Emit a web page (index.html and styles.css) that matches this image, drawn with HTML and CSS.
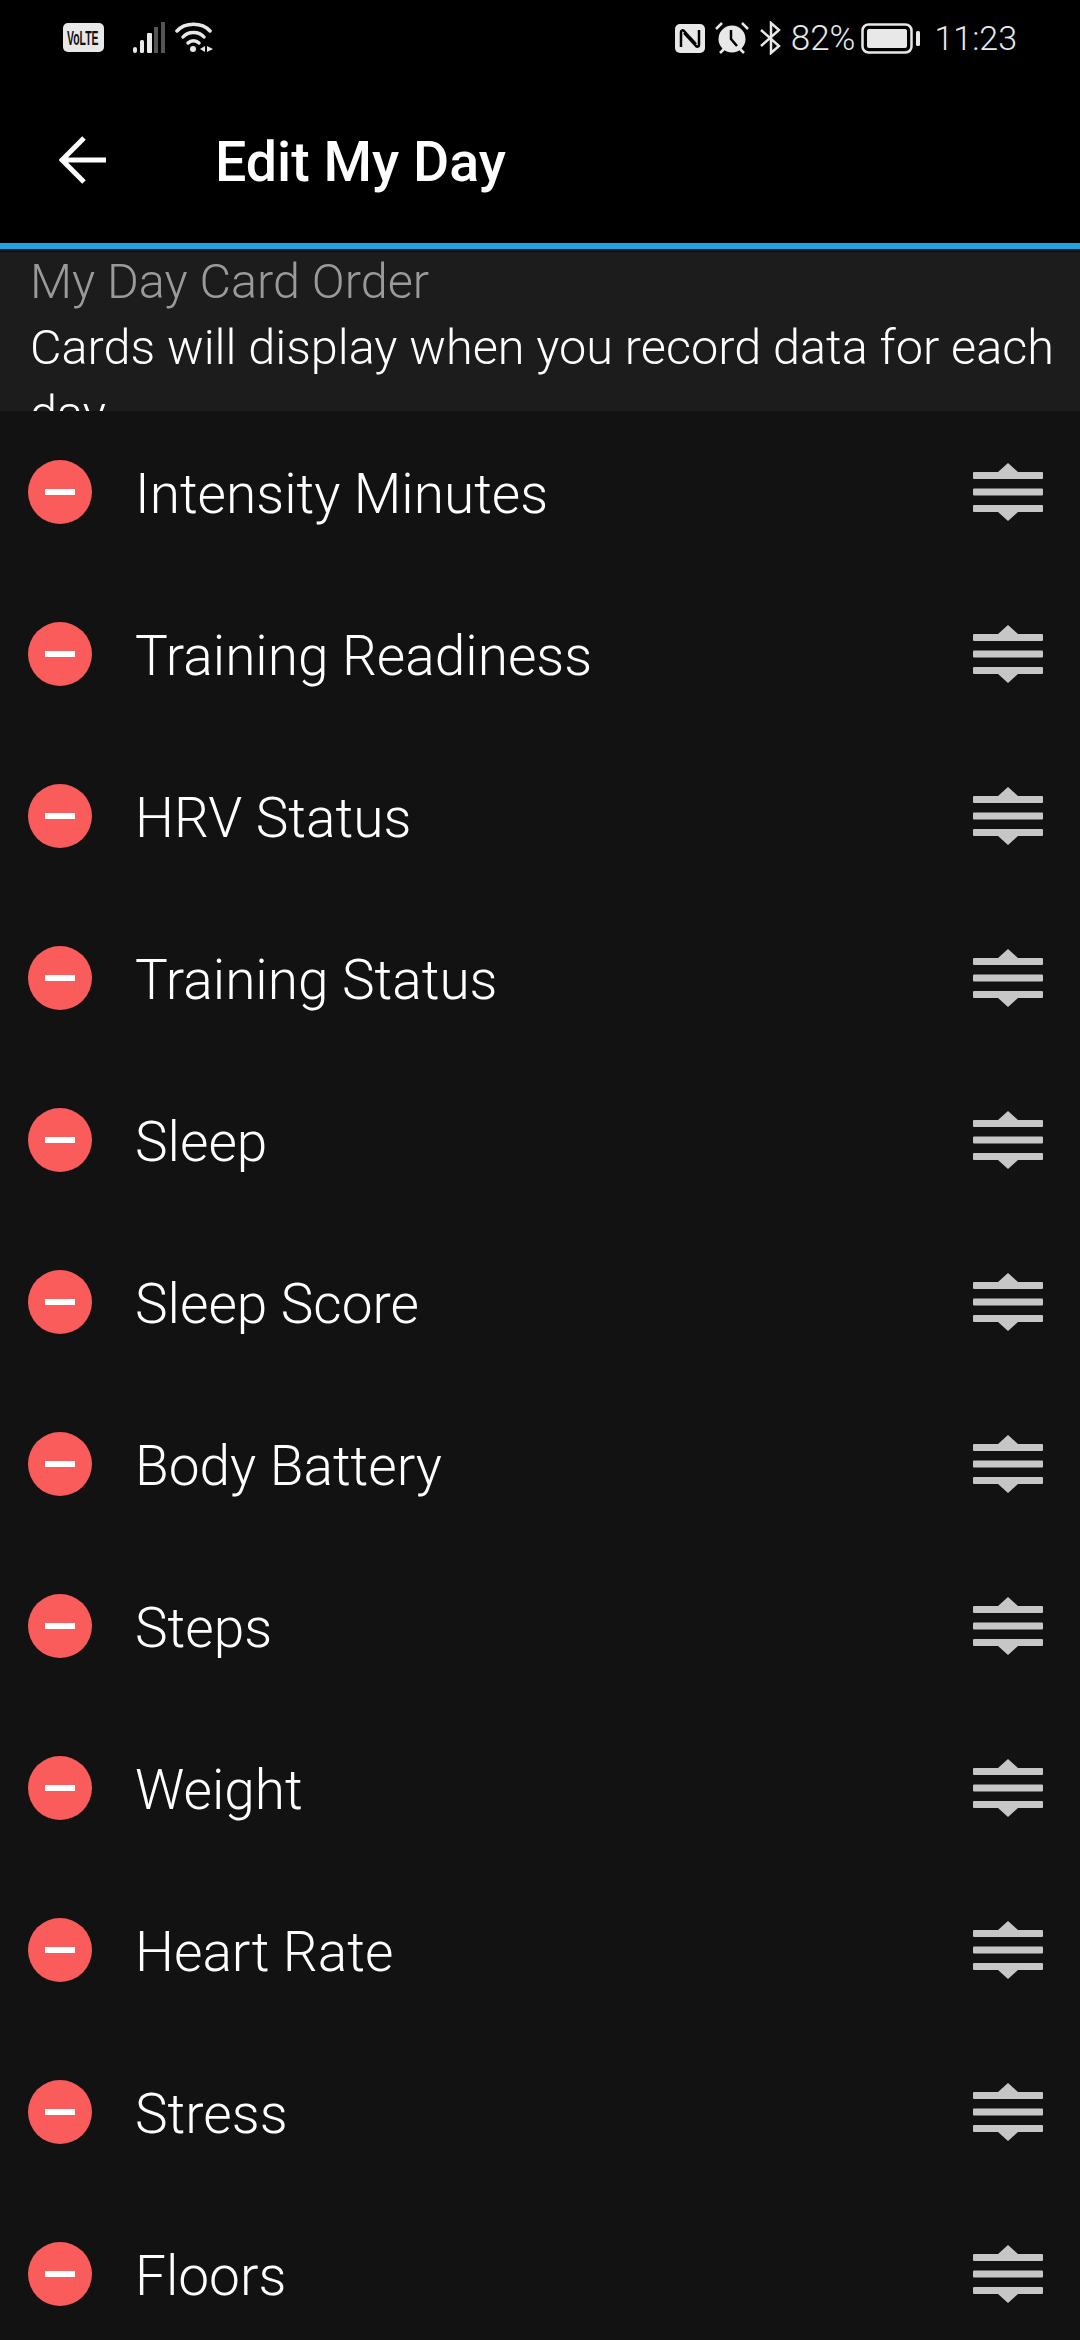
FILE: index.html
```html
<!DOCTYPE html>
<html>
    <head>
        <meta charset="utf-8" />
        <title>Edit My Day</title>
        <link rel="stylesheet" href="styles.css">
    </head>
    <body>
        <svg class="defs" width="0" height="0">
            <symbol id="minus" viewBox="0 0 64 64">
                <circle cx="32" cy="32" r="32" fill="#fa5c5c"/>
                <rect x="17" y="29" width="30" height="6" fill="#fff"/>
            </symbol>
            <symbol id="drag" viewBox="0 0 70 58">
                <path d="M35 0L45 9H25Z" fill="#c6c6c6"/>
                <path d="M35 58L45 49H25Z" fill="#c6c6c6"/>
                <rect x="0" y="9" width="70" height="7" rx="1" fill="#c6c6c6"/>
                <rect x="0" y="25.500" width="70" height="7" rx="1" fill="#c6c6c6"/>
                <rect x="0" y="42" width="70" height="7" rx="1" fill="#c6c6c6"/>
            </symbol>
        </svg>

        <div class="status-bar">
            <div class="status-left">
                <svg class="volte" width="41" height="29" viewBox="0 0 41 29">
                    <rect width="41" height="29" rx="5" fill="#e8e8e8"/>
                    <text transform="translate(4 22) scale(.72 1.45)" font-family="Liberation Sans" font-weight="bold" font-size="14.500" fill="#111">VoLTE</text>
                </svg>
                <svg class="signal" width="32" height="31" viewBox="0 0 32 31">
                    <rect x="0" y="25" width="4" height="6" rx="2" fill="#e8e8e8"/>
                    <rect x="7" y="18" width="4" height="13" rx="1.500" fill="#e8e8e8"/>
                    <rect x="14" y="11" width="5" height="20" rx="1" fill="#e8e8e8"/>
                    <rect x="21" y="5" width="4" height="26" fill="#555"/>
                    <rect x="28" y="0" width="4" height="31" fill="#555"/>
                </svg>
                <svg class="wifi" width="38" height="31" viewBox="0 0 38 31">
                    <path d="M2 9C10 0 27 0 35 9" fill="none" stroke="#e8e8e8" stroke-width="3.500" stroke-linecap="round"/>
                    <path d="M8 15C13 9 24 9 29 15" fill="none" stroke="#e8e8e8" stroke-width="3.500" stroke-linecap="round"/>
                    <path d="M13 21C16 18 21 18 24 21" fill="none" stroke="#e8e8e8" stroke-width="3.500" stroke-linecap="round"/>
                    <circle cx="18" cy="27" r="3" fill="#e8e8e8"/>
                    <path d="M30 24V30L25 27Z" fill="#e8e8e8"/>
                    <path d="M32 24V30L38 27Z" fill="#e8e8e8"/>
                </svg>
            </div>
            <div class="status-right">
                <svg class="nfc" width="30" height="29" viewBox="0 0 30 29">
                    <rect width="30" height="29" rx="5" fill="#e8e8e8"/>
                    <path d="M6 23V8C6 6 8 6 9 7L21 20M24 6V21C24 23 22 23 21 22L9 9" fill="none" stroke="#000" stroke-width="2.500"/>
                </svg>
                <svg class="alarm" width="34" height="32" viewBox="0 0 34 32">
                    <circle cx="17" cy="17" r="13.500" fill="#e8e8e8"/>
                    <path d="M16 8V17L22 24" fill="none" stroke="#000" stroke-width="2.500"/>
                    <path d="M1 7L7 1M33 7L27 1M5 31L9 27M29 31L25 27" stroke="#e8e8e8" stroke-width="2.500"/>
                </svg>
                <svg class="bluetooth" width="21" height="34" viewBox="0 0 21 34">
                    <path d="M1 9L19 25L11 32V2L19 9L1 25" fill="none" stroke="#e8e8e8" stroke-width="2.500"/>
                </svg>
                <span class="battery-pct">82%</span>
                <svg class="battery" width="59" height="31" viewBox="0 0 59 31">
                    <rect x="1.500" y="1.500" width="49" height="28" rx="6" fill="none" stroke="#e8e8e8" stroke-width="2.500"/>
                    <rect x="6" y="6" width="40" height="19" rx="2" fill="#e8e8e8"/>
                    <rect x="55" y="8" width="4" height="15" rx="1.500" fill="#e8e8e8"/>
                </svg>
                <span class="clock">11:23</span>
            </div>
        </div>

        <header class="toolbar">
            <svg class="back" width="47" height="48" viewBox="0 0 47 48">
                <path d="M3 24H47M25 2L3 24L25 46" fill="none" stroke="#fff" stroke-width="5"/>
            </svg>
            <h1>Edit My Day</h1>
        </header>

        <section class="intro">
            <p class="intro-title">My Day Card Order</p>
            <p class="intro-text">Cards will display when you record data for each day</p>
        </section>

        <ul class="cards">
            <li><svg class="remove"><use href="#minus"/></svg><span>Intensity Minutes</span><svg class="handle"><use href="#drag"/></svg></li>
            <li><svg class="remove"><use href="#minus"/></svg><span>Training Readiness</span><svg class="handle"><use href="#drag"/></svg></li>
            <li><svg class="remove"><use href="#minus"/></svg><span>HRV Status</span><svg class="handle"><use href="#drag"/></svg></li>
            <li><svg class="remove"><use href="#minus"/></svg><span>Training Status</span><svg class="handle"><use href="#drag"/></svg></li>
            <li><svg class="remove"><use href="#minus"/></svg><span>Sleep</span><svg class="handle"><use href="#drag"/></svg></li>
            <li><svg class="remove"><use href="#minus"/></svg><span>Sleep Score</span><svg class="handle"><use href="#drag"/></svg></li>
            <li><svg class="remove"><use href="#minus"/></svg><span>Body Battery</span><svg class="handle"><use href="#drag"/></svg></li>
            <li><svg class="remove"><use href="#minus"/></svg><span>Steps</span><svg class="handle"><use href="#drag"/></svg></li>
            <li><svg class="remove"><use href="#minus"/></svg><span>Weight</span><svg class="handle"><use href="#drag"/></svg></li>
            <li><svg class="remove"><use href="#minus"/></svg><span>Heart Rate</span><svg class="handle"><use href="#drag"/></svg></li>
            <li><svg class="remove"><use href="#minus"/></svg><span>Stress</span><svg class="handle"><use href="#drag"/></svg></li>
            <li><svg class="remove"><use href="#minus"/></svg><span>Floors</span><svg class="handle"><use href="#drag"/></svg></li>
        </ul>
    </body>
</html>
```
FILE: styles.css
```css
html,
body {
    margin: 0;
    height: 2340px;
    overflow: hidden;
}

body {
    background-color: #121212;
    font-family: Roboto, sans-serif;
    color: #fff;
}

.defs {
    display: block;
    height: 0;
}

.status-bar {
    display: flex;
    justify-content: space-between;
    align-items: center;
    height: 76px;
    padding: 0 63px;
    background-color: #000;
    color: #e8e8e8;
}

.status-left,
.status-right {
    display: flex;
    align-items: center;
}

.status-left {
    margin-top: -1px;
}

.volte {
    margin-right: 29px;
}

.signal {
    margin-right: 10px;
}

.nfc {
    margin-right: 10px;
}

.alarm {
    margin-right: 11px;
}

.bluetooth {
    margin-right: 10px;
}

.battery-pct {
    font-size: 35px;
    font-weight: 300;
}

.clock {
    font-size: 34px;
    font-weight: 300;
}

.battery {
    margin: 0 14px 0 6px;
}

.toolbar {
    display: flex;
    align-items: center;
    height: 167px;
    padding-left: 59px;
    background-color: #000;
}

.back {
    flex: none;
}

.toolbar h1 {
    margin: 5px 0 0 109px;
    font-size: 55.500px;
    font-weight: 500;
}

.intro {
    height: 168px;
    box-sizing: border-box;
    overflow: hidden;
    padding: 0 20px 0 30px;
    border-top: 6px solid #1fa4e0;
    background-color: #1c1c1c;
    box-shadow: inset 0 4px 0 #121517;
    font-weight: 300;
    font-size: 48.600px;
    line-height: 66px;
}

.intro p {
    margin: 0;
}

.intro-title {
    color: #9a9a9a;
}

.cards {
    list-style: none;
    margin: 0;
    padding: 0;
}

.cards li {
    display: flex;
    align-items: center;
    height: 162px;
    padding: 0 37px 0 28px;
    font-size: 55px;
    font-weight: 300;
}

.remove {
    flex: none;
    width: 64px;
    height: 64px;
}

.cards span {
    flex: 1;
    margin-left: 43px;
    padding-top: 4px;
}

.handle {
    flex: none;
    width: 70px;
    height: 58px;
}
```
